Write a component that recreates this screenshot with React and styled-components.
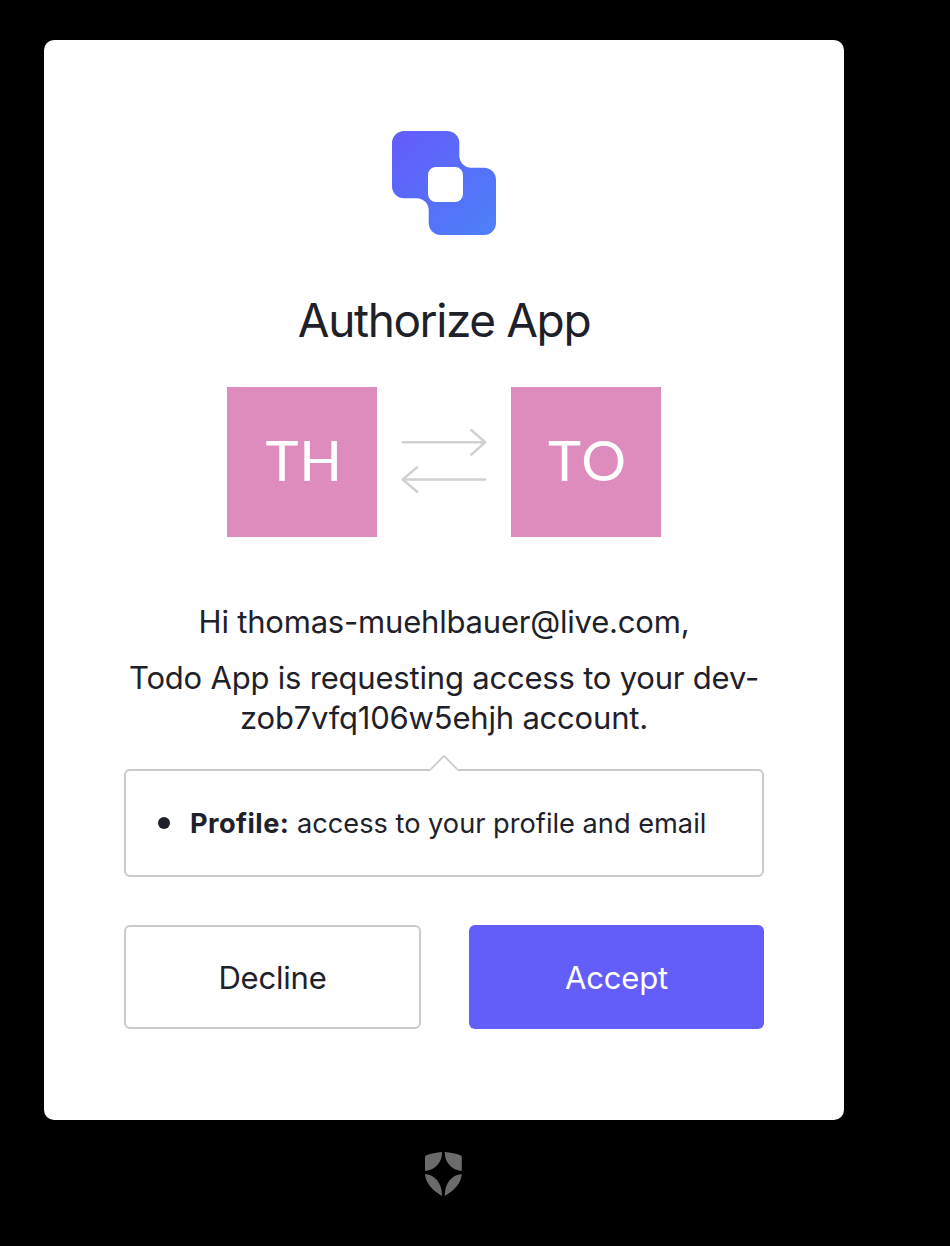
import React from "react";
import styled, { createGlobalStyle } from "styled-components";

const GlobalStyle = createGlobalStyle`
  *, *::before, *::after { box-sizing: border-box; }
  body {
    margin: 0;
    background: #000;
    color: #1e212a;
    font-family: Inter, "Liberation Sans", sans-serif;
  }
`;

const Page = styled.main`
  width: 888px;
  height: 1246px;
  padding-top: 40px;
  display: flex;
  flex-direction: column;
  align-items: center;
`;

const Card = styled.section`
  width: 800px;
  height: 1080px;
  padding: 91px 80px;
  border-radius: 10px;
  background: #fff;
  display: flex;
  flex-direction: column;
  align-items: center;
`;

const Title = styled.h1`
  margin: 55px 0 37px;
  font-size: 46px;
  line-height: 60px;
  font-weight: 400;
  letter-spacing: -1.4px;
  white-space: nowrap;
`;

const Exchange = styled.div`
  display: flex;
  align-items: center;
  gap: 24px;
`;

const Tile = styled.div`
  width: 150px;
  height: 150px;
  padding: 0 0 6px 4px;
  display: flex;
  align-items: center;
  justify-content: center;
  background: #de8bbd;
  color: #fff;
  font-family: Lato, sans-serif;
  font-size: 56px;
  letter-spacing: ${(p) => p.$spacing}px;
`;

const Message = styled.p`
  margin: ${(p) => p.$top}px 0 0;
  font-size: 31px;
  line-height: 40px;
  text-align: center;
  white-space: nowrap;
`;

const Line = styled.span`
  display: block;
  letter-spacing: -0.2px;
`;

const Scopes = styled.ul`
  position: relative;
  width: 640px;
  height: 108px;
  margin: 31px 0 48px;
  padding: 0 0 0 32px;
  display: flex;
  align-items: center;
  list-style: none;
  border: 2px solid #c9cace;
  border-radius: 6px;
`;

const Pointer = styled.svg`
  position: absolute;
  left: 302px;
  top: -16px;
`;

const Scope = styled.li`
  display: flex;
  align-items: center;
  gap: 20px;
  font-size: 27.2px;
  line-height: 36px;
  white-space: nowrap;
  &::before {
    content: "";
    width: 12px;
    height: 12px;
    border-radius: 50%;
    background: #1e212a;
  }
`;

const ScopeText = styled.span`
  padding-top: 1px;
`;

const ScopeName = styled.strong`
  font-weight: 700;
  letter-spacing: 0.45px;
`;

const Actions = styled.div`
  width: 640px;
  display: flex;
  justify-content: space-between;
`;

const Button = styled.button`
  width: ${(p) => (p.$primary ? 295 : 297)}px;
  height: 104px;
  padding: 1px 0 0;
  border: ${(p) => (p.$primary ? "0" : "2px solid #c9cace")};
  border-radius: 6px;
  background: ${(p) => (p.$primary ? "#635dfa" : "#fff")};
  color: ${(p) => (p.$primary ? "#fff" : "#1e212a")};
  font-family: inherit;
  font-size: 31px;
  line-height: 40px;
  letter-spacing: -0.2px;
`;

const Shield = styled.svg`
  margin-top: 32px;
`;

export default function App() {
  return (
    <>
      <GlobalStyle />
      <Page>
        <Card>
          <svg width="104" height="104" viewBox="0 0 104 104">
            <defs>
              <linearGradient id="brand" x1="0" y1="0" x2="1" y2="1">
                <stop offset="0.06" stopColor="#635dfa" />
                <stop offset="0.95" stopColor="#4d7ff8" />
              </linearGradient>
            </defs>
            <path
              fill="url(#brand)"
              fillRule="evenodd"
              d="M12 0H55.3a12 12 0 0 1 12 12V24.7a12 12 0 0 0 12 12H92a12 12 0 0 1 12 12V92a12 12 0 0 1-12 12H48.7a12 12 0 0 1-12-12V79.3a12 12 0 0 0-12-12H12a12 12 0 0 1-12-12V12a12 12 0 0 1 12-12ZM44 36a8 8 0 0 0-8 8V63a8 8 0 0 0 8 8H63a8 8 0 0 0 8-8V44a8 8 0 0 0-8-8Z"
            />
          </svg>
          <Title>Authorize App</Title>
          <Exchange>
            <Tile $spacing={0.5}>TH</Tile>
            <svg width="86" height="66" viewBox="0 0 86 66" fill="none" stroke="#d0d1d4" strokeWidth="2.5" strokeLinecap="round" strokeLinejoin="round">
              <path d="M1.7 13.3H84.2M70.3 1L84.2 13.3L70.3 25.6M84.2 50.5H1.7M16.1 38.2L1.7 50.5L16.1 62.8" />
            </svg>
            <Tile $spacing={2}>TO</Tile>
          </Exchange>
          <Message $top={65}>
            <Line>Hi thomas-muehlbauer@live.com,</Line>
          </Message>
          <Message $top={16}>
            <Line>Todo App is requesting access to your dev-</Line>
            <Line>zob7vfq106w5ehjh account.</Line>
          </Message>
          <Scopes>
            <Pointer width="32" height="18" viewBox="0 0 32 18">
              <path d="M2 14.5V18H30V14.5L16 0.5Z" fill="#fff" />
              <path d="M2 15L16 1L30 15" fill="none" stroke="#c9cace" strokeWidth="1.7" />
            </Pointer>
            <Scope>
              <ScopeText>
                <ScopeName>Profile:</ScopeName> access to your profile and email
              </ScopeText>
            </Scope>
          </Scopes>
          <Actions>
            <Button>Decline</Button>
            <Button $primary>Accept</Button>
          </Actions>
        </Card>
        <Shield width="38" height="44" viewBox="0 0 38 44" fill="#6b6b6b">
          <path d="M17 0C17.5 9 11 18.2 0 19V5.2C0 4.2 0.5 3.6 1.5 3.2C6 1.5 11 0.5 17 0ZM19.8 0C25.8 0.5 30.8 1.5 35.3 3.2C36.3 3.6 36.8 4.2 36.8 5.2V19C25.8 18.2 19.3 9 19.8 0ZM0 22C10.5 22.8 17.3 32 17 44C7.5 38.5 0.5 31 0 22ZM36.8 22C26.3 22.8 19.5 32 19.8 44C29.3 38.5 36.3 31 36.8 22Z" />
        </Shield>
      </Page>
    </>
  );
}
